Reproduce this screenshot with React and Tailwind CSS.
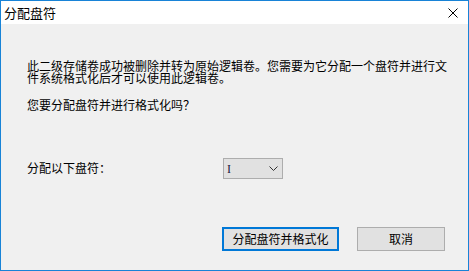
import React from "react";

const cjk = { fontFamily: '"Noto Sans CJK SC", "Noto Sans", sans-serif' };

function CloseIcon() {
  return (
    <svg width="10" height="10" viewBox="0 0 10 10" className="block">
      <path d="M0.5 0.5 L9.5 9.5 M9.5 0.5 L0.5 9.5" stroke="#000" strokeWidth="1" fill="none" />
    </svg>
  );
}

function Chevron() {
  return (
    <svg width="9" height="5" viewBox="0 0 9 5" className="block">
      <path d="M0.5 0.5 L4.5 4.5 L8.5 0.5" stroke="#333" strokeWidth="1" fill="none" />
    </svg>
  );
}

export default function App() {
  return (
    <div
      className="w-[469px] h-[271px] flex flex-col border border-[#1883d7] bg-[#f0f0f0] text-black"
      style={cjk}
    >
      {/* Title bar */}
      <div className="h-[23px] shrink-0 bg-white flex items-center justify-between pl-[3px] pr-[10px]">
        <span className="text-[13px] leading-[13px]">分配盘符</span>
        <CloseIcon />
      </div>

      {/* Body */}
      <div className="flex-1 flex flex-col pl-[26px] pt-[36px]">
        <p className="w-[426px] text-[12px] leading-[12px]">
          此二级存储卷成功被删除并转为原始逻辑卷。您需要为它分配一个盘符并进行文件系统格式化后才可以使用此逻辑卷。
        </p>
        <p className="mt-[15px] text-[12px] leading-[12px]">您要分配盘符并进行格式化吗？</p>

        <div className="mt-[47px] flex items-center">
          <span className="w-[196px] text-[12px] leading-[12px] -mt-[2px]">分配以下盘符：</span>
          <div className="w-[60px] h-[21px] border border-[#adadad] bg-[#e1e1e1] flex items-center justify-between pl-[3px] pr-[4px]">
            <span
              className="text-[12px] leading-[12px] text-[#1a1a40]"
              style={{ fontFamily: '"Liberation Serif", serif' }}
            >
              I
            </span>
            <Chevron />
          </div>
        </div>

        <div className="mt-[48px] flex justify-end gap-[18px] pr-[23px]">
          <button className="w-[117px] h-[24px] border-2 border-[#0078d7] bg-[#e1e1e1] text-[12px] leading-[12px] flex items-center justify-center">
            分配盘符并格式化
          </button>
          <button className="w-[88px] h-[24px] border border-[#adadad] bg-[#e1e1e1] text-[12px] leading-[12px] flex items-center justify-center">
            取消
          </button>
        </div>
      </div>
    </div>
  );
}
